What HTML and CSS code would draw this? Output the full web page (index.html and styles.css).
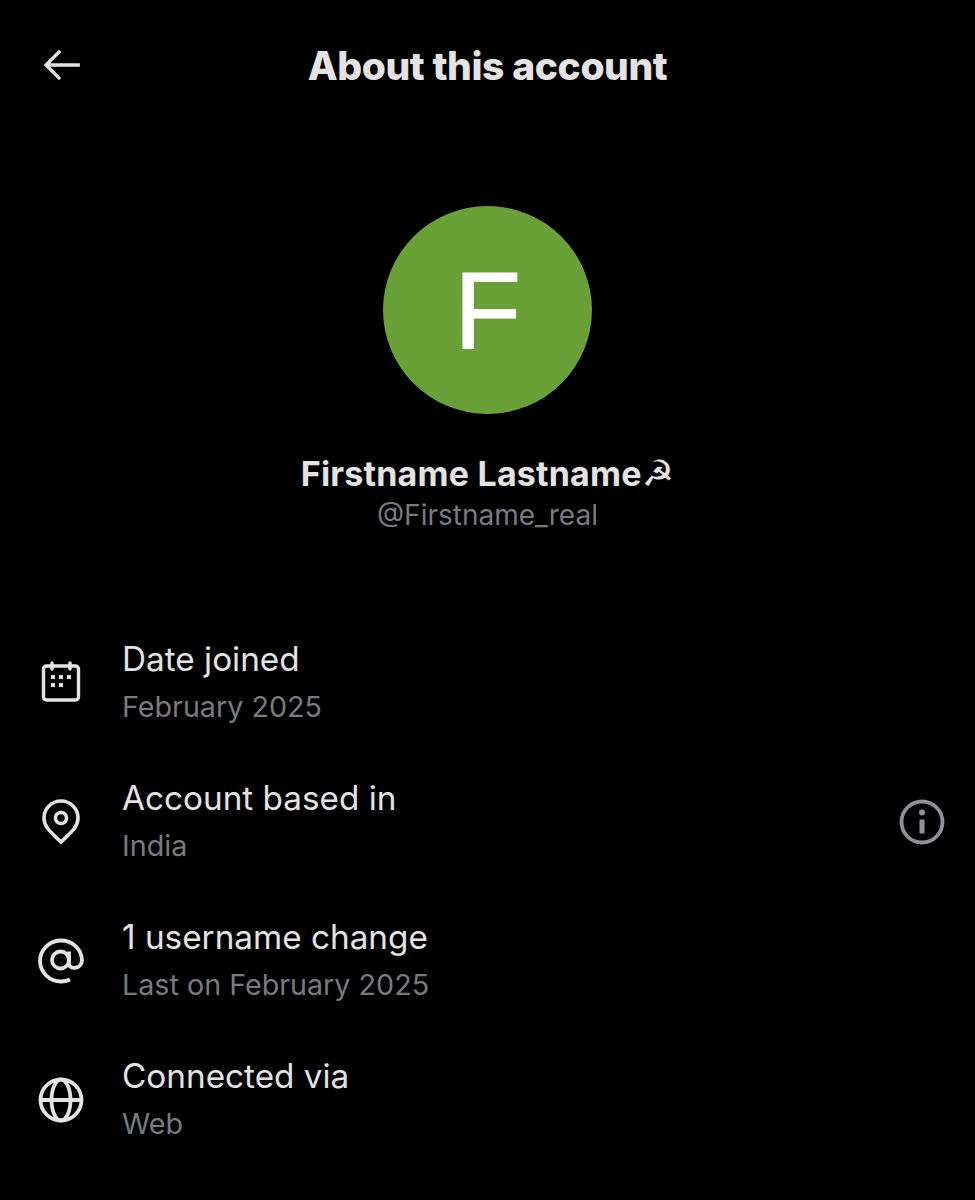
FILE: index.html
```html
<!DOCTYPE html>
<html>
<head>
  <meta charset="utf-8">
  <title>About this account</title>
  <link rel="stylesheet" href="styles.css">
</head>
<body>
  <div class="topo">
    <svg class="voltar" viewBox="0 0 40 34" fill="none" stroke="#e3e3e3" stroke-width="3.6">
      <path d="M39 17H3M18 2L3 17l15 15"/>
    </svg>
    <h1 class="titulo">About this account</h1>
  </div>

  <div class="perfil">
    <div class="avatar">F</div>
    <h2 class="nome">Firstname Lastname<span class="foice">☭</span></h2>
    <div class="usuario">@Firstname_real</div>
  </div>

  <ul class="lista">
    <li class="item">
      <svg class="icone" viewBox="0 0 46 46" fill="none" stroke="#e3e3e3" stroke-width="3.4">
        <rect x="5.500" y="6" width="35" height="34" rx="3"/>
        <path d="M14 3v6M32 3v6" stroke-linecap="round"/>
        <path d="M13 17h4M21 17h4M29 17h4M13 25h4M21 25h4" stroke-width="4"/>
      </svg>
      <div class="textos">
        <div class="rotulo">Date joined</div>
        <div class="valor">February 2025</div>
      </div>
    </li>
    <li class="item">
      <svg class="icone" viewBox="0 0 46 46" fill="none" stroke="#e3e3e3" stroke-width="3.600">
        <path d="M23 43C15 35 6 29 6 19a17 17 0 0 1 34 0c0 10-9 16-17 24z"/>
        <circle cx="23" cy="19" r="5.500"/>
      </svg>
      <div class="textos">
        <div class="rotulo">Account based in</div>
        <div class="valor">India</div>
      </div>
      <svg class="info" viewBox="0 0 46 46" fill="none" stroke="#8b9298" stroke-width="3.800">
        <circle cx="23" cy="23" r="20.500"/>
        <circle cx="23" cy="13.500" r="3" fill="#8b9298" stroke="none"/>
        <path d="M23 20.500v14" stroke-width="5"/>
      </svg>
    </li>
    <li class="item">
      <svg class="icone" viewBox="0 0 46 46" fill="none" stroke="#e3e3e3" stroke-width="3.800">
        <circle cx="22.500" cy="22" r="8.500"/>
        <path d="M31 13.500v12c0 6.500 13 6 13-3.500a21 20.500 0 1 0-21 21.500c3 0 6-.5 9-2"/>
      </svg>
      <div class="textos">
        <div class="rotulo">1 username change</div>
        <div class="valor">Last on February 2025</div>
      </div>
    </li>
    <li class="item">
      <svg class="icone" viewBox="0 0 46 46" fill="none" stroke="#e3e3e3" stroke-width="3.800">
        <circle cx="23" cy="23" r="20.500"/>
        <ellipse cx="23" cy="23" rx="9.500" ry="20.500"/>
        <path d="M3 23h40"/>
      </svg>
      <div class="textos">
        <div class="rotulo">Connected via</div>
        <div class="valor">Web</div>
      </div>
    </li>
  </ul>
</body>
</html>
```

FILE: styles.css
```css
* {
  box-sizing: border-box;
}

body {
  margin: 0;
  background-color: #000;
  color: #e3e3e3;
  font-family: Inter, "Liberation Sans", sans-serif;
}

.topo {
  display: grid;
  grid-template-columns: 1fr auto 1fr;
  align-items: center;
  height: 130px;
  margin-bottom: 2px;
  padding-left: 43px;
}
.voltar {
  width: 38px;
  height: 32px;
}
.titulo {
  margin: 0 43px 0 0;
  font-size: 39px;
  font-weight: 800;
  letter-spacing: -0.4px;
  white-space: nowrap;
}

.perfil {
  display: flex;
  flex-direction: column;
  align-items: center;
  padding-top: 74px;
}
.avatar {
  display: flex;
  align-items: center;
  justify-content: center;
  width: 209px;
  height: 208px;
  border-radius: 50%;
  background-color: #6aa038;
  color: #fff;
  font-family: "Liberation Sans", sans-serif;
  font-size: 110px;
  -webkit-text-stroke: 1px #fff;
}
.nome {
  margin: 38px 0 0;
  font-size: 34px;
  font-weight: 700;
  line-height: 44px;
  letter-spacing: 0.2px;
  white-space: nowrap;
}
.foice {
  font-family: "DejaVu Sans", sans-serif;
  font-size: 36px;
  font-weight: 700;
  line-height: 0;
}
.usuario {
  font-size: 28px;
  line-height: 38px;
  color: #767b81;
}

.lista {
  list-style: none;
  margin: 79px 0 0;
  padding: 0 30px 0 38px;
}
.item {
  display: flex;
  align-items: center;
  height: 139px;
}
.icone {
  flex: none;
  width: 46px;
  height: 46px;
  margin-right: 38px;
}
.textos {
  flex-grow: 1;
}
.rotulo {
  font-size: 33.3px;
  line-height: 48px;
}
.valor {
  font-size: 28.7px;
  line-height: 48px;
  color: #767b81;
}
.info {
  flex: none;
  width: 46px;
  height: 46px;
}
```
